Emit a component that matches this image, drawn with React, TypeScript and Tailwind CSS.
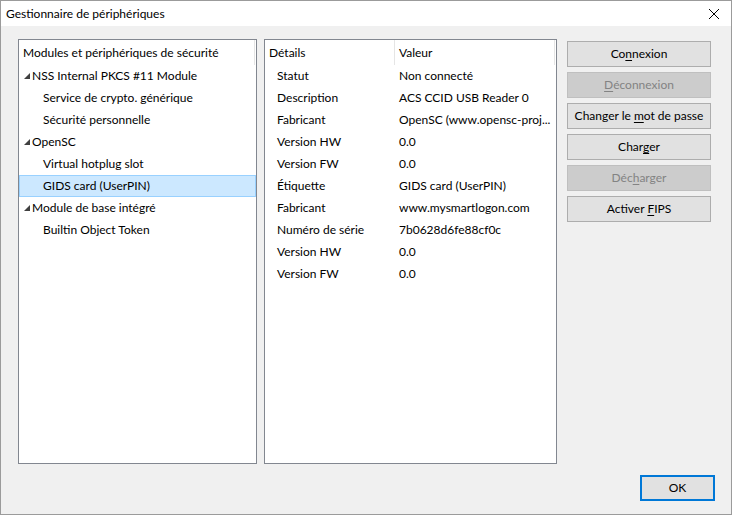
import React from "react";

const tree: { label: string; level: 0 | 1; selected?: boolean }[] = [
  { label: "NSS Internal PKCS #11 Module", level: 0 },
  { label: "Service de crypto. générique", level: 1 },
  { label: "Sécurité personnelle", level: 1 },
  { label: "OpenSC", level: 0 },
  { label: "Virtual hotplug slot", level: 1 },
  { label: "GIDS card (UserPIN)", level: 1, selected: true },
  { label: "Module de base intégré", level: 0 },
  { label: "Builtin Object Token", level: 1 },
];

const details: [string, string][] = [
  ["Statut", "Non connecté"],
  ["Description", "ACS CCID USB Reader 0"],
  ["Fabricant", "OpenSC (www.opensc-proj..."],
  ["Version HW", "0.0"],
  ["Version FW", "0.0"],
  ["Étiquette", "GIDS card (UserPIN)"],
  ["Fabricant", "www.mysmartlogon.com"],
  ["Numéro de série", "7b0628d6fe88cf0c"],
  ["Version HW", "0.0"],
  ["Version FW", "0.0"],
];

function Btn({ pre, u, post, disabled }: { pre: string; u: string; post: string; disabled?: boolean }) {
  return (
    <div
      className={
        "h-[26px] w-[144px] flex items-center justify-center border whitespace-nowrap " +
        (disabled
          ? "bg-[#cccccc] border-[#bfbfbf] text-[#838383]"
          : "bg-[#e1e1e1] border-[#adadad] text-black")
      }
    >
      <span>
        {pre}
        <span className="underline underline-offset-2">{u}</span>
        {post}
      </span>
    </div>
  );
}

export default function App() {
  return (
    <div
      className="w-[732px] h-[515px] flex flex-col border border-[#9b9b9b] bg-[#f0f0f0] text-[12px] text-black overflow-hidden"
      style={{ fontFamily: '"Segoe UI", "Lato", "Noto Sans", sans-serif' }}
    >
      <div className="h-[25px] bg-white flex items-center justify-between pl-[5px] pr-[8px] shrink-0">
        <span>Gestionnaire de périphériques</span>
        <svg width="12" height="12" viewBox="0 0 12 12" className="mr-[3px]">
          <path d="M1 1 L11 11 M11 1 L1 11" stroke="#000" strokeWidth="1" />
        </svg>
      </div>
      <div className="flex pl-[17px] pt-[13px] gap-[7px]">
        <div className="w-[239px] h-[425px] bg-white border border-[#828790] flex flex-col">
          <div className="h-[25px] shrink-0 flex items-center pl-[4px] border-r border-[#e5e5e5] mr-[1px]">
            Modules et périphériques de sécurité
          </div>
          {tree.map((t, i) => (
            <div
              key={i}
              className={
                "h-[22px] shrink-0 flex items-center border " +
                (t.selected ? "bg-[#cce8ff] border-[#99d1ff]" : "border-transparent")
              }
            >
              {t.level === 0 ? (
                <>
                  <svg width="8" height="8" viewBox="0 0 8 8" className="ml-[3px] mr-[1px]">
                    <path d="M7 1 L7 7 L1 7 Z" fill="#404040" />
                  </svg>
                  <span>{t.label}</span>
                </>
              ) : (
                <span className="pl-[23px]">{t.label}</span>
              )}
            </div>
          ))}
        </div>
        <div className="w-[293px] h-[425px] bg-white border border-[#828790] flex flex-col">
          <div className="h-[25px] shrink-0 flex items-center">
            <div className="w-[130px] pl-[4px] h-full flex items-center border-r border-[#e5e5e5]">Détails</div>
            <div className="flex-1 pl-[4px] h-full flex items-center border-r border-[#e5e5e5] mr-[1px]">Valeur</div>
          </div>
          {details.map(([k, v], i) => (
            <div key={i} className="h-[22px] shrink-0 flex items-center border border-transparent">
              <div className="w-[133px] pl-[11px] shrink-0">{k}</div>
              <div className="whitespace-nowrap">{v}</div>
            </div>
          ))}
        </div>
        <div className="flex flex-col gap-[5px] ml-[3px] pt-[2px]">
          <Btn pre="Co" u="n" post="nexion" />
          <Btn pre="" u="D" post="éconnexion" disabled />
          <Btn pre="Changer le " u="m" post="ot de passe" />
          <Btn pre="Char" u="g" post="er" />
          <Btn pre="Déc" u="h" post="arger" disabled />
          <Btn pre="Activer " u="F" post="IPS" />
        </div>
      </div>
      <div className="flex justify-end pr-[16px] pt-[11px]">
        <div className="w-[75px] h-[26px] bg-[#e1e1e1] border-2 border-[#0078d7] flex items-center justify-center">
          OK
        </div>
      </div>
    </div>
  );
}
